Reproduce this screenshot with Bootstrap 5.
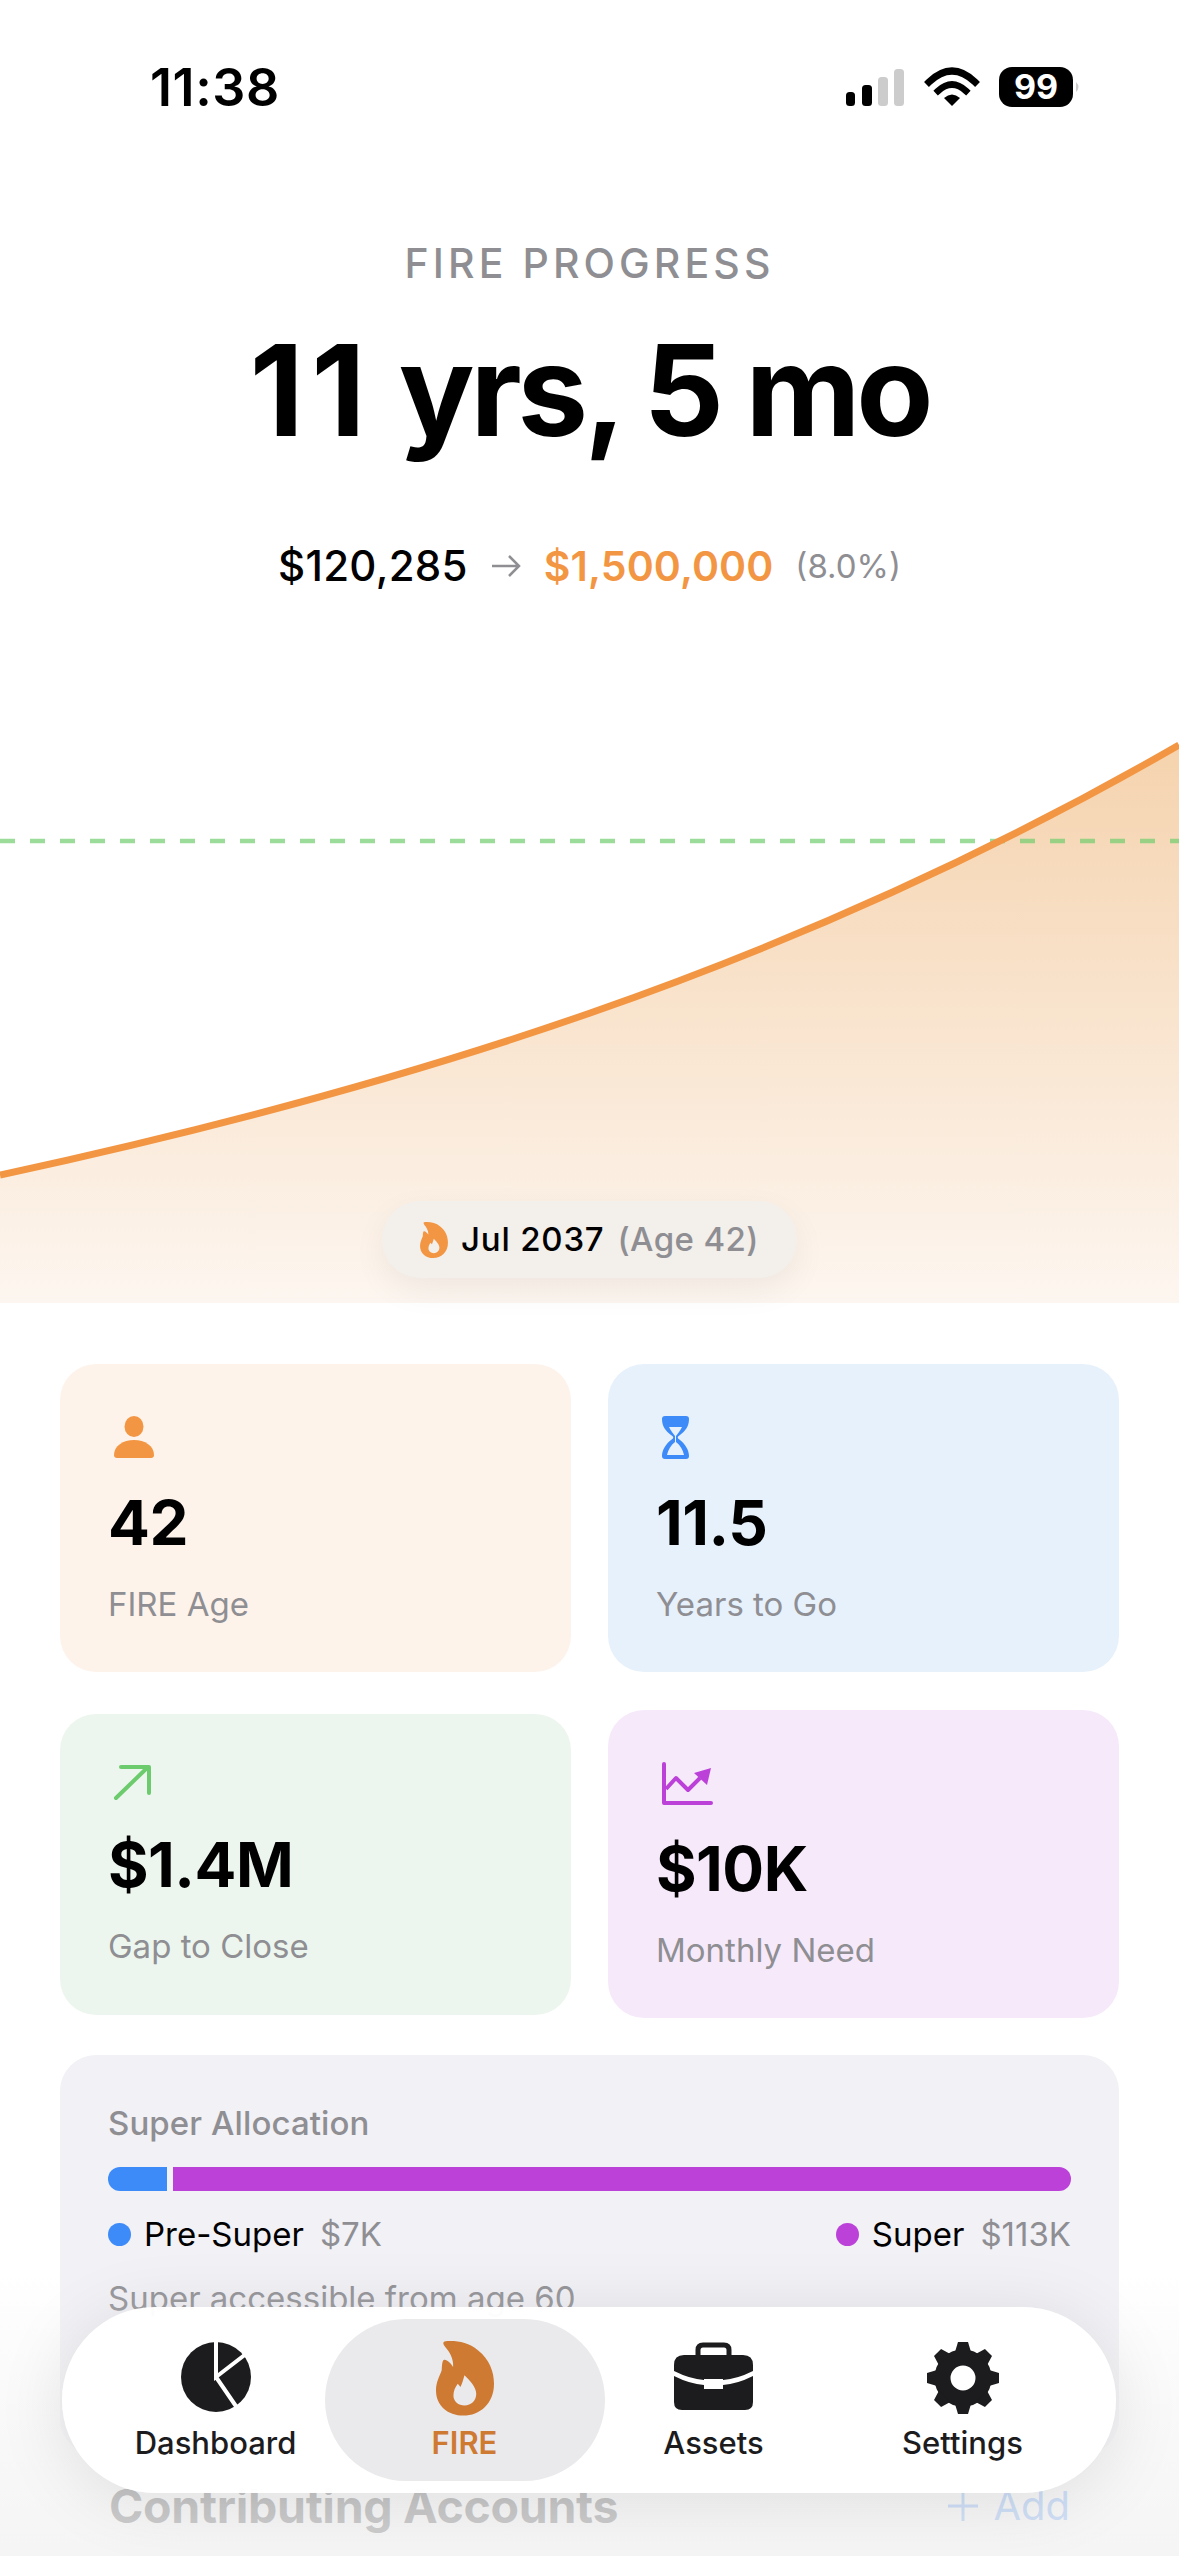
<!DOCTYPE html>
<html lang="en">
<head>
<meta charset="UTF-8" />
<meta name="viewport" content="width=device-width, initial-scale=1" />
<title>FIRE Progress</title>
<link href="https://cdn.jsdelivr.net/npm/bootstrap@5.3.0/dist/css/bootstrap.min.css" rel="stylesheet" />
<style>
    html, body { height: 2556px; overflow: hidden; }
    body { background: #fff; color: #000; font-family: "Inter", "Liberation Sans", sans-serif; }
    .phone { position: relative; width: 1179px; height: 2556px; overflow: hidden; }

    .status-bar { height: 175px; padding: 61px 98px 0 150px; }
    .status-time { font-size: 52px; font-weight: 600; line-height: 54px; letter-spacing: .6px; }
    .status-icons { margin-top: 6px; }
    .status-icons svg { display: block; }

    .hero-label { font-size: 41px; line-height: 46px; color: #8e8e93; letter-spacing: 4.1px; margin-top: 65px; font-weight: 500; }
    .hero-title { font-size: 126px; line-height: 130px; font-weight: 700; letter-spacing: -4.2px; margin: 39px 0 0; }
    .hero-eleven { letter-spacing: 7.5px; }
    .hero-money { font-size: 42px; line-height: 50px; margin-top: 86px; font-weight: 500; gap: 22px; }
    .money-start { letter-spacing: .3px; }
    .money-goal { color: #f39643; font-weight: 600; font-size: 41px; letter-spacing: .1px; }
    .money-pct { color: #8e8e93; font-size: 33px; font-weight: 400; }

    .chart-wrap { position: relative; height: 583px; margin-top: 129px; }
    .chart-wrap svg { display: block; }
    .date-pill { position: absolute; left: 382px; bottom: 25px; width: 415px; height: 77px; border-radius: 38px; background: #f3efeb; box-shadow: 0 12px 34px rgba(0,0,0,.06); font-size: 33px; gap: 13px; padding-left: 38px; }
    .pill-date { font-weight: 500; letter-spacing: .8px; }
    .pill-age { color: #8e8e93; font-weight: 500; letter-spacing: .4px; }

    .stats { padding: 61px 60px 0 60px; }
    .stat-row { --bs-gutter-x: 37px; --bs-gutter-y: 0; margin-bottom: 38px; }
    .stat-row:last-child { margin-bottom: 37px; }
    .stat-tile { border-radius: 36px; padding: 52px 48px 0; height: 308px; }
    .stat-tile.short { height: 301px; padding-top: 51px; }
    .tile-orange { background: #fdf3eb; }
    .tile-blue { background: #e7f1fb; }
    .tile-green { background: #edf6ee; }
    .tile-purple { background: #f6eafa; }
    .tile-icon { display: block; height: 43px; }
    .short .tile-icon { height: 36px; }
    .stat-value { font-size: 62px; line-height: 66px; font-weight: 700; margin-top: 31px; letter-spacing: -.5px; }
    .stat-name { font-size: 33px; line-height: 40px; color: #8e8e93; margin-top: 28px; }

    .alloc-panel { background: #f1f1f6; border-radius: 36px; margin: 0 60px; padding: 48px 48px 0; height: 400px; }
    .alloc-title { font-size: 33px; line-height: 40px; color: #8e8e93; font-weight: 500; letter-spacing: .1px; }
    .alloc-bar { height: 24px; margin-top: 24px; gap: 6px; }
    .alloc-pre { width: 59px; background: #3d8bf8; border-radius: 12px 0 0 12px; }
    .alloc-super { flex: 1; background: #bb41d9; border-radius: 0 12px 12px 0; }
    .alloc-legend { margin-top: 23px; font-size: 33px; line-height: 40px; }
    .legend-dot { width: 23px; height: 23px; border-radius: 50%; display: inline-block; margin-right: 13px; }
    .legend-amt { color: #8e8e93; margin-left: 16px; }
    .alloc-note { font-size: 33px; line-height: 40px; color: #8e8e93; margin-top: 24px; }

    .section-head { position: absolute; left: 109px; right: 109px; top: 2479px; }
    .section-title { font-size: 46.5px; line-height: 54px; font-weight: 700; color: #1c1c1e; letter-spacing: -.3px; }
    .section-add { font-size: 40px; line-height: 54px; color: #3d8bf8; gap: 14px; }

    .bottom-fade { position: absolute; left: 0; right: 0; top: 2270px; bottom: 0; background: linear-gradient(to bottom, rgba(255,255,255,0) 0, rgba(246,246,247,.72) 55%, rgba(243,243,244,.84) 100%); }
    .tab-bar { position: absolute; left: 62px; top: 2307px; width: 1054px; height: 186px; border-radius: 93px; background: rgba(255,255,255,.97); box-shadow: 0 8px 70px rgba(0,0,0,.1); padding: 12px 29px; }
    .tab-item { width: 249px; height: 162px; color: #1c1c1e; font-size: 31px; line-height: 36px; font-weight: 500; padding-top: 20px; }
    .tab-item svg { display: block; height: 78px; margin-bottom: 8px; }
    .tab-item.on { width: 280px; margin: 0 -15.5px; background: #eaeaec; border-radius: 81px; color: #cf7a33; font-weight: 600; }
</style>
</head>
<body>
<div class="phone">

    <div class="status-bar d-flex justify-content-between align-items-start">
        <div class="status-time">11:38</div>
        <div class="status-icons d-flex align-items-center">
            <svg width="235" height="40" viewBox="846 67 235 40">
                <rect x="846" y="92" width="9" height="14" rx="3.5" fill="#000"/>
                <rect x="862" y="85" width="10" height="21" rx="3.5" fill="#000"/>
                <rect x="878" y="77" width="10" height="29" rx="3.5" fill="#ccc"/>
                <rect x="894" y="69" width="10" height="37" rx="3.5" fill="#ccc"/>
                <path d="M929 82 Q952 60 975 82" fill="none" stroke="#000" stroke-width="7" stroke-linecap="square"/>
                <path d="M938 91 Q952 78 966 91" fill="none" stroke="#000" stroke-width="6.5" stroke-linecap="square"/>
                <path d="M944 98 Q952 91 960 98 L952 106 Z" fill="#000"/>
                <rect x="999" y="67" width="74" height="40" rx="13" fill="#000"/>
                <text x="1036" y="99" text-anchor="middle" font-family="Inter, sans-serif" font-size="34" font-weight="700" fill="#fff">99</text>
                <path d="M1076 82 Q1081 87 1076 92 Z" fill="#ccc"/>
            </svg>
        </div>
    </div>

    <div class="text-center">
        <div class="hero-label">FIRE PROGRESS</div>
        <h1 class="hero-title"><span class="hero-eleven">11</span> yrs, 5 mo</h1>
        <div class="hero-money d-flex justify-content-center align-items-center">
            <span class="money-start">$120,285</span>
            <svg width="32" height="26" viewBox="0 0 32 26"><path d="M2 13H29M19 3l10 10-10 10" fill="none" stroke="#8e8e93" stroke-width="2.5"/></svg>
            <span class="money-goal">$1,500,000</span>
            <span class="money-pct">(8.0%)</span>
        </div>
    </div>

    <div class="chart-wrap">
        <svg width="1179" height="583" viewBox="0 720 1179 583">
            <defs>
                <linearGradient id="areaFill" x1="0" y1="745" x2="0" y2="1303" gradientUnits="userSpaceOnUse">
                    <stop offset="0" stop-color="#f5d3ae"/>
                    <stop offset="1" stop-color="#fdf6f0"/>
                </linearGradient>
            </defs>
            <path d="M0 1175C393 1090 786 972 1179 745V1303H0Z" fill="url(#areaFill)"/>
            <path d="M0 841H1179" stroke="#6ccb6c" stroke-opacity=".68" stroke-width="4.5" stroke-dasharray="15 15"/>
            <path d="M0 1175C393 1090 786 972 1179 745" fill="none" stroke="#f39643" stroke-width="7"/>
        </svg>
        <div class="date-pill d-flex align-items-center">
            <svg width="28" height="36" viewBox="285 117 173 223"><path fill="#f39643" fill-rule="evenodd" d="M310 119C340 115 380 120 410 145C445 172 458 210 458 245C458 305 415 340 367 340C320 340 285 310 285 265C285 240 295 225 302 205C303 190 303 178 308 174C318 172 330 185 336 195C338 170 325 150 312 135C306 127 305 121 310 119ZM370 220C366 235 362 248 358 255L350 245C342 255 337 268 337 280C337 298 352 310 370 310C390 310 405 295 405 275C405 255 385 235 370 220Z"/></svg>
            <span class="pill-date">Jul 2037</span>
            <span class="pill-age">(Age 42)</span>
        </div>
    </div>

    <div class="stats">
        <div class="row stat-row">
            <div class="col-6">
                <div class="stat-tile tile-orange">
                    <svg class="tile-icon" width="46" height="43" viewBox="108 1416 46 43"><ellipse cx="134" cy="1426.5" rx="9.5" ry="10.5" fill="#f39643"/><path d="M114 1455C114 1446 123 1440 134 1440S154 1446 154 1455Q154 1458 151 1458H117Q114 1458 114 1455Z" fill="#f39643"/></svg>
                    <div class="stat-value">42</div>
                    <div class="stat-name">FIRE Age</div>
                </div>
            </div>
            <div class="col-6">
                <div class="stat-tile tile-blue">
                    <svg class="tile-icon" width="39" height="43" viewBox="656 1415 39 43"><path fill="#3d8bf8" fill-rule="evenodd" d="M665 1415H686Q689 1415 689 1418C689 1426 685 1430 680 1434C677 1436 677 1437 680 1439C685 1443 689 1449 689 1455Q689 1458 686 1458H665Q662 1458 662 1455C662 1449 666 1443 671 1439C674 1437 674 1436 671 1434C666 1430 662 1426 662 1418Q662 1415 665 1415ZM669 1426C671 1430 673 1432 675 1435V1441C671 1444 668 1449 667 1454H684C683 1449 680 1444 676 1441V1435C678 1432 680 1430 682 1426Z"/></svg>
                    <div class="stat-value">11.5</div>
                    <div class="stat-name">Years to Go</div>
                </div>
            </div>
        </div>
        <div class="row stat-row align-items-center">
            <div class="col-6">
                <div class="stat-tile short tile-green">
                    <svg class="tile-icon" width="45" height="36" viewBox="108 1764 45 36"><path d="M116 1797L148 1766M121 1766H149V1792" fill="none" stroke="#6ccb6c" stroke-width="4" stroke-linecap="round" stroke-linejoin="round"/></svg>
                    <div class="stat-value">$1.4M</div>
                    <div class="stat-name">Gap to Close</div>
                </div>
            </div>
            <div class="col-6">
                <div class="stat-tile tile-purple">
                    <svg class="tile-icon" width="58" height="43" viewBox="656 1760 58 43"><path d="M664 1762V1801H711" fill="none" stroke="#bb41d9" stroke-width="4" stroke-linecap="round" stroke-linejoin="round"/><path d="M666 1787L676 1776L688 1788L700 1776" fill="none" stroke="#bb41d9" stroke-width="4" stroke-linejoin="round"/><path d="M694 1771L711 1766L707 1783Z" fill="#bb41d9"/></svg>
                    <div class="stat-value">$10K</div>
                    <div class="stat-name">Monthly Need</div>
                </div>
            </div>
        </div>
    </div>

    <div class="alloc-panel">
        <div class="alloc-title">Super Allocation</div>
        <div class="alloc-bar d-flex">
            <div class="alloc-pre"></div>
            <div class="alloc-super"></div>
        </div>
        <div class="alloc-legend d-flex justify-content-between">
            <div class="d-flex align-items-center"><span class="legend-dot" style="background:#3d8bf8"></span>Pre-Super<span class="legend-amt">$7K</span></div>
            <div class="d-flex align-items-center"><span class="legend-dot" style="background:#bb41d9"></span>Super<span class="legend-amt">$113K</span></div>
        </div>
        <div class="alloc-note">Super accessible from age 60</div>
    </div>

    <div class="section-head d-flex justify-content-between">
        <div class="section-title">Contributing Accounts</div>
        <div class="section-add d-flex align-items-center">
            <svg width="32" height="32" viewBox="0 0 32 32"><path d="M16 1V31M1 16H31" stroke="#3d8bf8" stroke-width="3"/></svg>
            <span>Add</span>
        </div>
    </div>

    <div class="bottom-fade"></div>

    <div class="tab-bar d-flex">
        <div class="tab-item d-flex flex-column align-items-center">
            <svg width="72" height="78" viewBox="179 2341 72 78">
                <circle cx="215" cy="2379" r="35" fill="#1c1c1e"/>
                <path d="M215 2341V2379L250 2352M215 2379L241 2417" fill="none" stroke="#fff" stroke-width="4"/>
            </svg>
            <span>Dashboard</span>
        </div>
        <div class="tab-item on d-flex flex-column align-items-center">
            <svg width="58" height="78" viewBox="285 112 173 232"><path fill="#cf7a33" fill-rule="evenodd" d="M310 119C340 115 380 120 410 145C445 172 458 210 458 245C458 305 415 340 367 340C320 340 285 310 285 265C285 240 295 225 302 205C303 190 303 178 308 174C318 172 330 185 336 195C338 170 325 150 312 135C306 127 305 121 310 119ZM370 220C366 235 362 248 358 255L350 245C342 255 337 268 337 280C337 298 352 310 370 310C390 310 405 295 405 275C405 255 385 235 370 220Z"/></svg>
            <span>FIRE</span>
        </div>
        <div class="tab-item d-flex flex-column align-items-center">
            <svg width="80" height="78" viewBox="673 2341 80 78">
                <path d="M697 2358V2352Q697 2347 702 2347H723Q728 2347 728 2352V2358" fill="none" stroke="#1c1c1e" stroke-width="5"/>
                <path d="M683 2357H742Q752 2357 752 2367V2373Q736 2381 722 2382V2381H703V2382Q689 2381 673 2373V2367Q673 2357 683 2357Z" fill="#1c1c1e"/>
                <path d="M673 2378Q689 2386 703 2387V2391H722V2387Q736 2386 752 2378V2404Q752 2412 744 2412H681Q673 2412 673 2404Z" fill="#1c1c1e"/>
            </svg>
            <span>Assets</span>
        </div>
        <div class="tab-item d-flex flex-column align-items-center">
            <svg width="76" height="78" viewBox="925 2340 76 78">
                <circle cx="963" cy="2379" r="20.5" fill="none" stroke="#1c1c1e" stroke-width="16"/>
                <g fill="#1c1c1e">
                    <path id="tooth" d="M955 2353L958 2343H968L971 2353Z"/>
                    <use href="#tooth" transform="rotate(45 963 2379)"/>
                    <use href="#tooth" transform="rotate(90 963 2379)"/>
                    <use href="#tooth" transform="rotate(135 963 2379)"/>
                    <use href="#tooth" transform="rotate(180 963 2379)"/>
                    <use href="#tooth" transform="rotate(225 963 2379)"/>
                    <use href="#tooth" transform="rotate(270 963 2379)"/>
                    <use href="#tooth" transform="rotate(315 963 2379)"/>
                </g>
            </svg>
            <span>Settings</span>
        </div>
    </div>
</div>
<script src="https://cdn.jsdelivr.net/npm/bootstrap@5.3.0/dist/js/bootstrap.bundle.min.js"></script>
</body>
</html>
